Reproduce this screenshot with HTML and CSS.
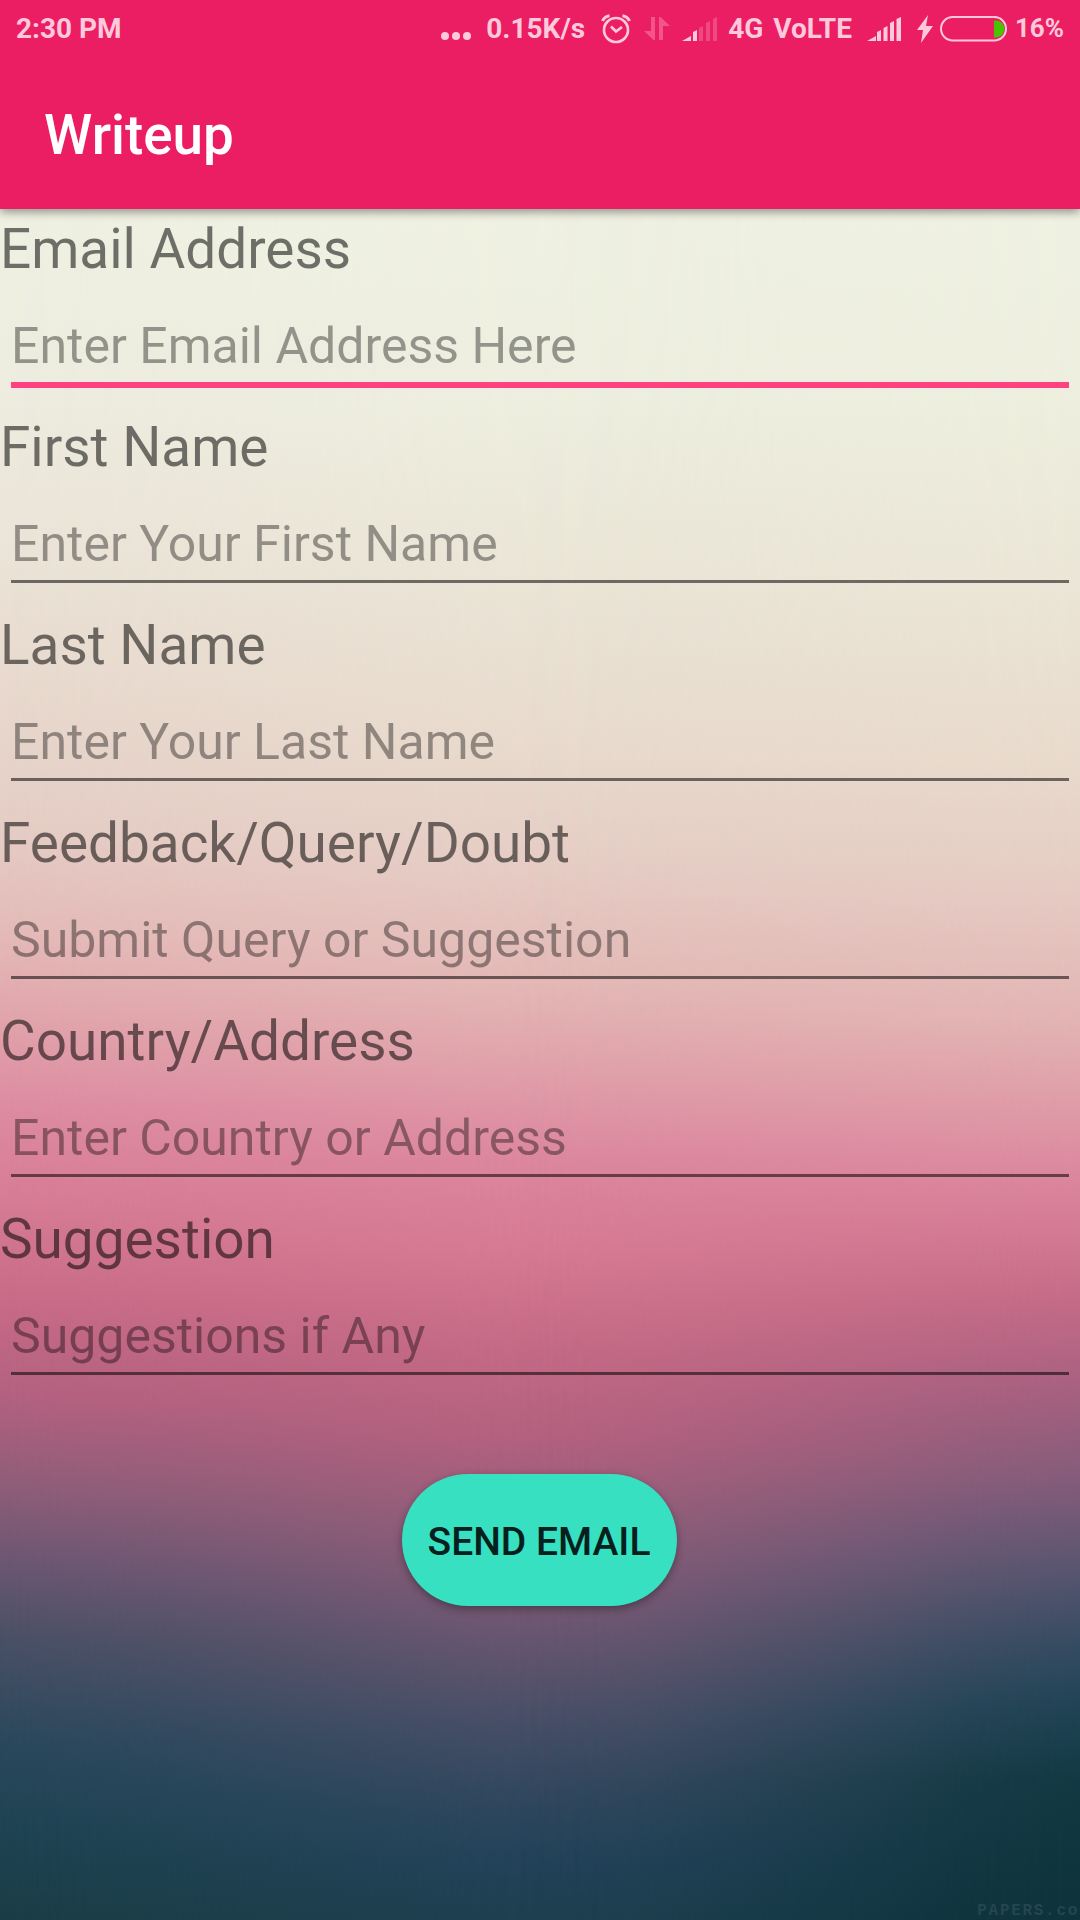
FILE: index.html
```html
<!DOCTYPE html>
<html lang="en">
<head>
<meta charset="utf-8">
<title>Writeup</title>
<link rel="stylesheet" href="styles.css">
</head>
<body>
<div class="screen">
  <div class="wallpaper"><div class="wash wash-left"></div><div class="wash wash-mid"></div><div class="wash wash-right"></div></div>
  <header class="top">
    <div class="status">
      <span class="clock">2:30 PM</span>
      <svg class="dots" width="32" height="10" viewBox="0 0 32 10"><circle cx="5" cy="5" r="4"/><circle cx="16" cy="5" r="4"/><circle cx="27" cy="5" r="4"/></svg>
      <span class="speed">0.15K/s</span>
      <svg class="alarm" width="30" height="30" viewBox="0 0 30 30"><circle cx="15" cy="16" r="12" fill="none" stroke-width="2.6"/><path d="M10 12.500l5 5 6-4.500" fill="none" stroke-width="2.8"/><path d="M1.500 7Q3.500 2.500 8.500 1.800M28.500 7Q26.500 2.500 21.500 1.800" fill="none" stroke-width="3"/></svg>
      <svg class="arrows" width="26" height="26" viewBox="0 0 26 26"><path d="M7 1h4v23H9.500L0 15h7zM15 24V1h1.500L26 10h-7v14z"/></svg>
      <svg class="signal" width="36" height="24" viewBox="0 0 36 24"><path d="M0 24l9-5v5zM11 15l4-2v11h-4z"/><path class="dim" d="M17 11l4-2v15h-4zM24 6l4-2v20h-4zM31 2l4-2v24h-4z"/></svg>
      <span class="net">4G</span>
      <span class="volte">VoLTE</span>
      <svg class="signal2" width="36" height="24" viewBox="0 0 36 24"><path d="M0 24l9-5v5zM10 15l4-2v11h-4zM16.500 11l4-2v15h-4zM23 6l4-2v20h-4zM29.500 2l4.500-2v24h-4.500z"/></svg>
      <svg class="bolt" width="16" height="28" viewBox="0 0 16 28"><path d="M11 0L0 15h6L4 28 16 11H9z"/></svg>
      <svg class="battery" width="67" height="26" viewBox="0 0 67 26"><rect x="1" y="1" width="65" height="23.500" rx="11.750" fill="none" stroke-width="2"/><path class="charge" d="M54 4.500h2a8 8 0 0 1 0 17h-2z"/></svg>
      <span class="percent">16%</span>
    </div>
    <h1 class="title">Writeup</h1>
  </header>
  <form class="form">
    <label class="field"><span class="label">Email Address</span><input class="input focused" type="text" placeholder="Enter Email Address Here"></label>
    <label class="field"><span class="label">First Name</span><input class="input" type="text" placeholder="Enter Your First Name"></label>
    <label class="field"><span class="label">Last Name</span><input class="input" type="text" placeholder="Enter Your Last Name"></label>
    <label class="field"><span class="label">Feedback/Query/Doubt</span><input class="input" type="text" placeholder="Submit Query or Suggestion"></label>
    <label class="field"><span class="label">Country/Address</span><input class="input" type="text" placeholder="Enter Country or Address"></label>
    <label class="field"><span class="label">Suggestion</span><input class="input" type="text" placeholder="Suggestions if Any"></label>
    <button class="send" type="button">SEND EMAIL</button>
  </form>
  <div class="credit">PAPERS.co</div>
</div>
</body>
</html>
```
FILE: styles.css
```css
* { box-sizing: border-box; }
body { margin: 0; font-family: Roboto, sans-serif; }
.screen { position: relative; width: 1080px; height: 1920px; overflow: hidden; isolation: isolate; }

/* Blurred sunset: three vertical washes blended across the width */
.wallpaper { position: absolute; inset: 0; z-index: -1; }
.wash { position: absolute; inset: 0; }
.wash-left { background: linear-gradient(#eff1e2 209px, #edecdf 400px, #ebe3d7 560px, #e8d8cd 700px, #e5cdc5 830px, #e4b9b7 940px, #e1a4ab 1020px, #dd8ba1 1110px, #d77c95 1200px, #c66a87 1310px, #b2617f 1400px, #8d5d79 1490px, #685671 1570px, #495066 1640px, #2b485c 1740px, #1f4454 1820px, #1a3d47 1920px); }
.wash-mid { background: linear-gradient(#eff1e2 209px, #edeedf 400px, #eae6d7 560px, #e8dacd 750px, #e5ccc4 870px, #e3b9b6 980px, #e0a1aa 1070px, #dc879e 1160px, #d67a93 1250px, #c46a86 1350px, #b3617e 1440px, #8f5d79 1540px, #6b5671 1635px, #4a4f68 1720px, #34485f 1790px, #23435a 1860px, #1e4050 1920px); mask-image: linear-gradient(90deg, transparent, rgba(0, 0, 0, .22) 15%, rgba(0, 0, 0, .55) 29%, rgba(0, 0, 0, .88) 43%, #000 56%); }
.wash-right { background: linear-gradient(#eff1e2 209px, #edeede 400px, #ebe7d8 560px, #e8dacc 760px, #e5cbc3 890px, #e2b4b3 1020px, #de98a5 1120px, #d9809a 1200px, #c46b87 1300px, #a5607f 1395px, #835c7a 1480px, #585570 1570px, #374c62 1640px, #1f4354 1710px, #123943 1780px, #0d323b 1920px); mask-image: linear-gradient(90deg, transparent 48%, rgba(0, 0, 0, .14) 60%, rgba(0, 0, 0, .5) 76%, rgba(0, 0, 0, .85) 90%, #000); }

.top { position: relative; height: 209px; background: #eb1e63; box-shadow: 0 3px 9px rgba(0, 0, 0, .4); }
.status { display: flex; height: 57px; padding: 0 16px; align-items: center; color: #ffc9dc; fill: #ffc9dc; stroke: none; font-size: 28px; font-weight: 700; line-height: 57px; white-space: nowrap; }
.status svg { flex: none; }
.clock { margin-right: auto; }
.dots { margin: 15px 14px 0 0; }
.speed { margin-right: 16px; }
.alarm { stroke: #ffc9dc; margin-right: 13px; }
.arrows { opacity: .32; margin-right: 12px; }
.signal { margin-right: 10px; }
.dim { opacity: .25; }
.net { margin-right: 10px; }
.volte { margin-right: 15px; }
.signal2 { margin-right: 14px; }
.bolt { margin-right: 7px; }
.battery { stroke: #ffc9dc; margin-right: 8px; }
.charge { fill: #49c400; stroke: none; }
.percent { font-size: 26px; }
.title { margin: 0; padding-left: 44px; font-size: 54.8px; font-weight: 500; line-height: 157px; color: #fff; }

.form { display: flex; flex-direction: column; }
.field { display: flex; flex-direction: column; height: 198px; }
.label { height: 72px; padding-top: 4px; font-size: 54.9px; line-height: 72px; color: rgba(0, 0, 0, .54); }
.input { width: 1058px; height: 104px; margin: 0 11px; padding: 29px 0 0; border: 0; border-bottom: 3px solid rgba(0, 0, 0, .54); background: none; font: 50px/60px Roboto, sans-serif; color: #222; outline: 0; }
.input::placeholder { color: rgba(0, 0, 0, .38); opacity: 1; }
.focused { height: 107px; border-bottom: 6px solid #ff4081; }
.send { align-self: center; width: 275px; height: 132px; margin: 77px 2px 0 0; padding: 4px 0 0; border: 0; border-radius: 66px; background: #36e0c0; box-shadow: 0 3px 8px rgba(0, 0, 0, .35); font: 500 39px Roboto, sans-serif; color: #06201d; }
.credit { position: absolute; right: 1px; bottom: 0; font: bold 16px/18px "Liberation Mono", monospace; letter-spacing: 1.7px; color: #24464f; }
```
